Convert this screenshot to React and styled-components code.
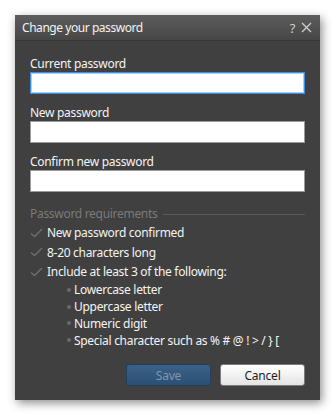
import React from 'react'
import styled, { createGlobalStyle } from 'styled-components'

const Global = createGlobalStyle`
  body {
    margin: 0;
    background: #ffffff;
    font-family: "Noto Sans", "Open Sans", sans-serif;
  }
`

const Page = styled.div`
  width: 335px;
  height: 417px;
  padding: 15px 0 0 15px;
  box-sizing: border-box;
`

const Dialog = styled.div`
  width: 305px;
  height: 385px;
  background: #404040;
  box-shadow: 2px 3px 9px rgba(0, 0, 0, 0.45);
  display: flex;
  flex-direction: column;
`

const TitleBar = styled.div`
  height: 25px;
  display: flex;
  align-items: center;
  justify-content: space-between;
  padding: 0 8px 0 7px;
  background: linear-gradient(#5d5d5d, #464646);
  border-bottom: 1px solid #383838;
  color: #f2f2f2;
  font-size: 12px;
  letter-spacing: -0.45px;
`

const TitleIcons = styled.div`
  display: flex;
  align-items: center;
  gap: 6px;
  color: #cfcfcf;
  font-size: 13px;
`

const Body = styled.div`
  flex: 1;
  padding: 14px 15px 14px 15px;
  display: flex;
  flex-direction: column;
  font-size: 12px;
  letter-spacing: -0.3px;
`

const Field = styled.div`
  display: flex;
  flex-direction: column;
  margin-bottom: 10px;
`

const Label = styled.label`
  color: #f4f4f4;
  line-height: 17px;
`

const Input = styled.div`
  height: 22px;
  box-sizing: border-box;
  background: #fff;
  border: 1px solid ${({ focused }) => (focused ? '#3d8ee6' : '#9a9a9a')};
  box-shadow: ${({ focused }) => (focused ? 'inset 0 0 0 1px #a9cdf3' : 'none')};
`

const ReqHeader = styled.div`
  display: flex;
  align-items: center;
  gap: 6px;
  margin-top: 4px;
  color: #7a7a7a;
  line-height: 16px;
  &::after {
    content: '';
    flex: 1;
    height: 1px;
    background: #585858;
    margin-top: 1px;
  }
`

const ReqList = styled.div`
  display: flex;
  flex-direction: column;
  margin-top: 1px;
`

const ReqItem = styled.div`
  display: flex;
  align-items: center;
  height: 19.5px;
  color: #f4f4f4;
  svg {
    width: 13px;
    margin-right: 4px;
    flex-shrink: 0;
  }
`

const SubItem = styled.div`
  display: flex;
  align-items: center;
  height: 16.8px;
  padding-left: 37px;
  color: #f4f4f4;
  &::before {
    content: '';
    width: 4px;
    height: 4px;
    border-radius: 50%;
    background: #6a6a6a;
    margin-right: 3px;
  }
`

const Footer = styled.div`
  margin-top: auto;
  display: flex;
  justify-content: flex-end;
  gap: 9px;
`

const Button = styled.button`
  width: 85px;
  height: 22px;
  border-radius: 3px;
  font-family: inherit;
  font-size: 12px;
  letter-spacing: -0.2px;
  padding: 0;
  border: 1px solid ${({ primary }) => (primary ? '#22405c' : '#7c7c7c')};
  background: ${({ primary }) =>
    primary ? 'linear-gradient(#3a6187, #2c5074)' : 'linear-gradient(#ffffff, #e4e4e4)'};
  color: ${({ primary }) => (primary ? '#7f97ad' : '#1e1e1e')};
`

const Check = () => (
  <svg viewBox="0 0 13 10" height="10">
    <path d="M1 5.5 L4.5 8.5 L12 1" fill="none" stroke="#6e6e6e" strokeWidth="1.4" />
  </svg>
)

const Close = () => (
  <svg width="11" height="11" viewBox="0 0 11 11">
    <path d="M1 1 L10 10 M10 1 L1 10" stroke="#cfcfcf" strokeWidth="1.3" />
  </svg>
)

export default function App() {
  return (
    <Page>
      <Global />
      <Dialog>
        <TitleBar>
          <span>Change your password</span>
          <TitleIcons>
            <span>?</span>
            <Close />
          </TitleIcons>
        </TitleBar>
        <Body>
          <Field>
            <Label>Current password</Label>
            <Input focused />
          </Field>
          <Field>
            <Label>New password</Label>
            <Input />
          </Field>
          <Field>
            <Label>Confirm new password</Label>
            <Input />
          </Field>
          <ReqHeader>Password requirements</ReqHeader>
          <ReqList>
            <ReqItem><Check />New password confirmed</ReqItem>
            <ReqItem><Check />8-20 characters long</ReqItem>
            <ReqItem><Check />Include at least 3 of the following:</ReqItem>
            <SubItem>Lowercase letter</SubItem>
            <SubItem>Uppercase letter</SubItem>
            <SubItem>Numeric digit</SubItem>
            <SubItem>Special character such as % # @ ! &gt; / } [</SubItem>
          </ReqList>
          <Footer>
            <Button primary>Save</Button>
            <Button>Cancel</Button>
          </Footer>
        </Body>
      </Dialog>
    </Page>
  )
}
